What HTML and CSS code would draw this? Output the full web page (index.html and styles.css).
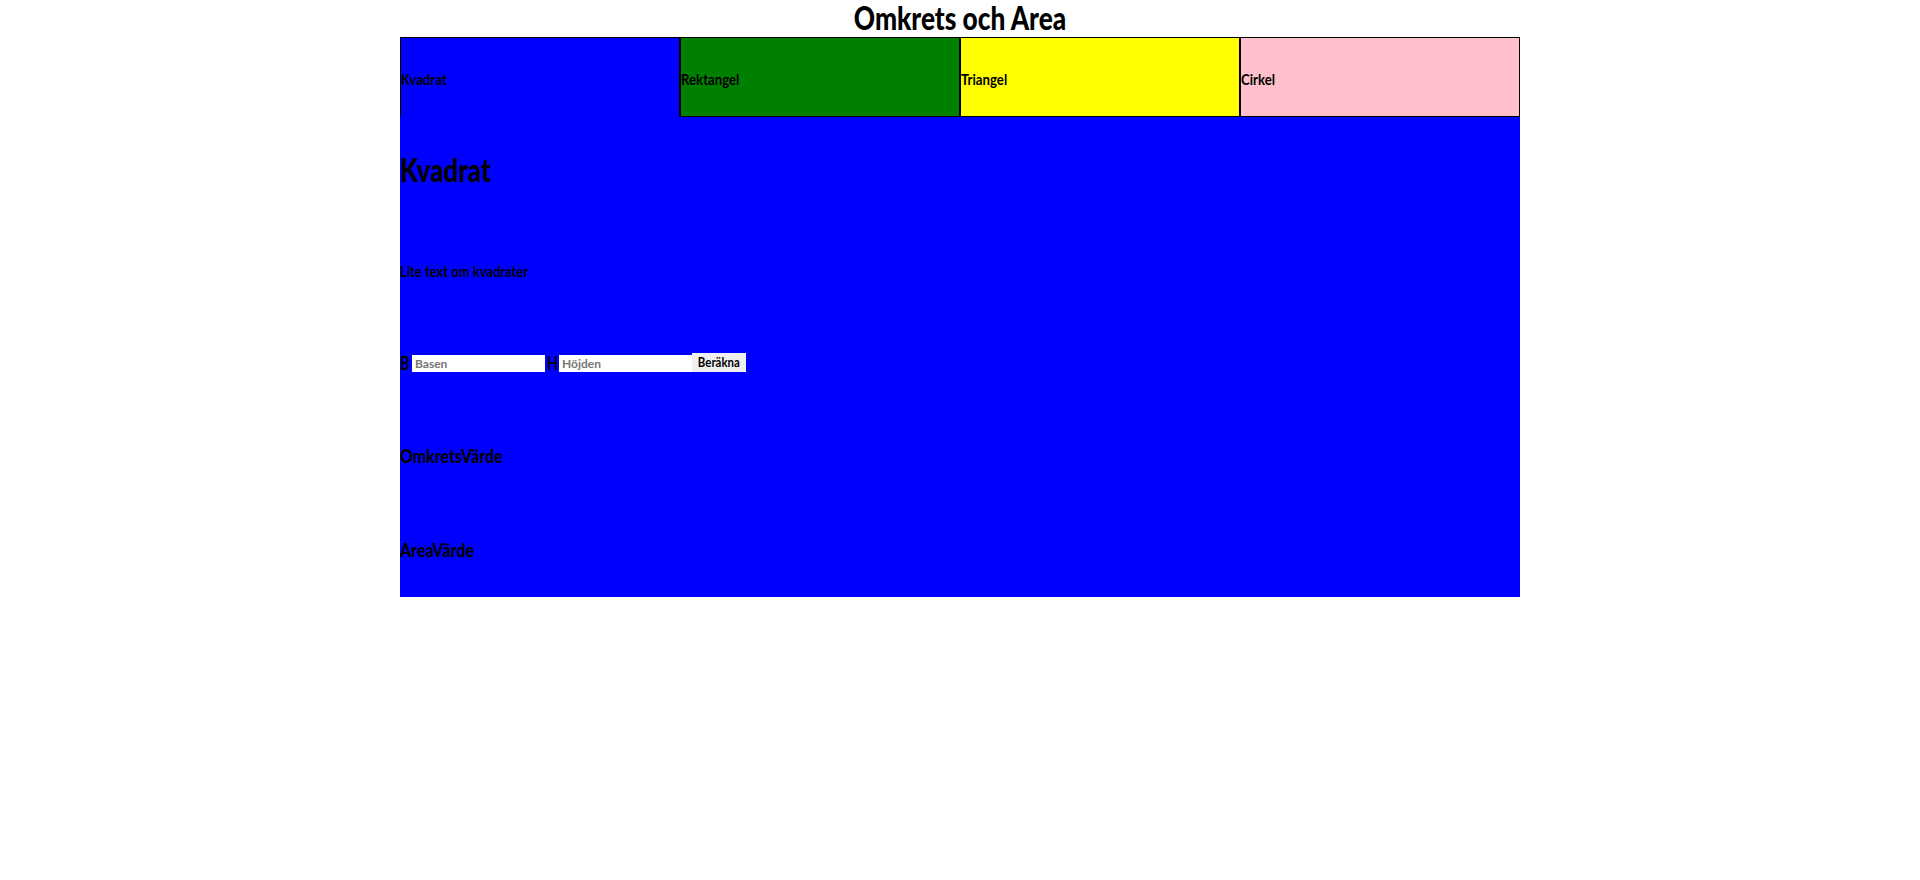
FILE: index.html
```html
<!DOCTYPE html>
<html lang="sv">
<head>
  <meta charset="UTF-8">
  <title>Omkrets och Area</title>
  <link rel="stylesheet" href="styles.css">
</head>
<body>
  <div class="wrapper">
    <h1>Omkrets och Area</h1>

    <!-- Flikar -->
    <nav class="tabs">
      <div class="tab tab-blue"><span>Kvadrat</span></div>
      <div class="tab tab-green"><span>Rektangel</span></div>
      <div class="tab tab-yellow"><span>Triangel</span></div>
      <div class="tab tab-pink"><span>Cirkel</span></div>
    </nav>

    <!-- Innehåll -->
    <main class="panel">
      <h2>Kvadrat</h2>
      <p class="intro">Lite text om kvadrater</p>
      <form class="calc">
        <label for="basen">B</label>
        <input id="basen" type="text" placeholder="Basen">
        <label for="hojden">H</label>
        <input id="hojden" type="text" placeholder="Höjden">
        <button type="button"><span>Beräkna</span></button>
      </form>
      <h3 class="perimeter">OmkretsVärde</h3>
      <h3 class="area">AreaVärde</h3>
    </main>
  </div>
</body>
</html>
```

FILE: styles.css
```css
body {
  margin: 0;
  background-color: #fff;
  color: #000;
  font-family: "Lato", sans-serif;
}

.wrapper {
  width: 1120px;
  margin: 0 auto;
}

/* Smalare text, närmare originalets typsnitt */
h1 {
  margin: 0;
  height: 37px;
  font-size: 32px;
  line-height: 36px;
  font-weight: 900;
  text-align: center;
  transform: scaleX(0.82);
}

/* Flikar */
.tabs {
  display: flex;
}

.tab {
  flex: 1;
  display: flex;
  align-items: center;
  height: 80px;
  box-sizing: border-box;
  padding-top: 4px;
  border: 1px solid #000;
  font-size: 15px;
  font-weight: 700;
}

.tab span {
  transform: scaleX(0.88);
  transform-origin: left center;
}

.tab-blue {
  background-color: #00f;
  border-bottom-color: #00f;
}

.tab-green {
  background-color: green;
}

.tab-yellow {
  background-color: #ff0;
}

.tab-pink {
  background-color: pink;
}

/* Innehåll */
.panel {
  height: 480px;
  background-color: #00f;
  overflow: hidden;
}

h2,
h3,
.intro {
  transform-origin: left center;
}

h2 {
  margin: 33px 0 0;
  font-size: 32px;
  line-height: 40px;
  font-weight: 900;
  transform: scaleX(0.81);
}

.intro {
  margin: 70px 0 0;
  font-size: 15px;
  line-height: 22px;
  font-weight: 700;
  transform: scaleX(0.865);
}

.calc {
  display: flex;
  align-items: center;
  margin-top: 70px;
  height: 22px;
  font-size: 18px;
  font-weight: 700;
}

.calc label {
  width: 12px;
  transform: scaleX(0.8);
  transform-origin: left center;
}

.calc input {
  width: 133px;
  height: 17px;
  box-sizing: border-box;
  padding: 0 3px;
  border: 0;
  background-color: #fff;
  font-family: inherit;
  font-size: 12px;
  font-weight: 700;
  margin-top: 1px;
}

.calc input + label {
  margin-left: 2px;
}

.calc button {
  width: 54px;
  height: 19px;
  padding: 0;
  border: 0;
  background-color: #efefef;
  font-family: inherit;
  font-size: 13px;
  font-weight: 700;
  margin-top: -2px;
}

.calc button span {
  display: inline-block;
  transform: scaleX(0.88);
}

h3 {
  margin: 0;
  font-size: 18px;
  line-height: 24px;
  font-weight: 900;
  transform: scaleX(0.88);
}

.perimeter {
  margin-top: 70px;
}

.area {
  margin-top: 70px;
}
```
